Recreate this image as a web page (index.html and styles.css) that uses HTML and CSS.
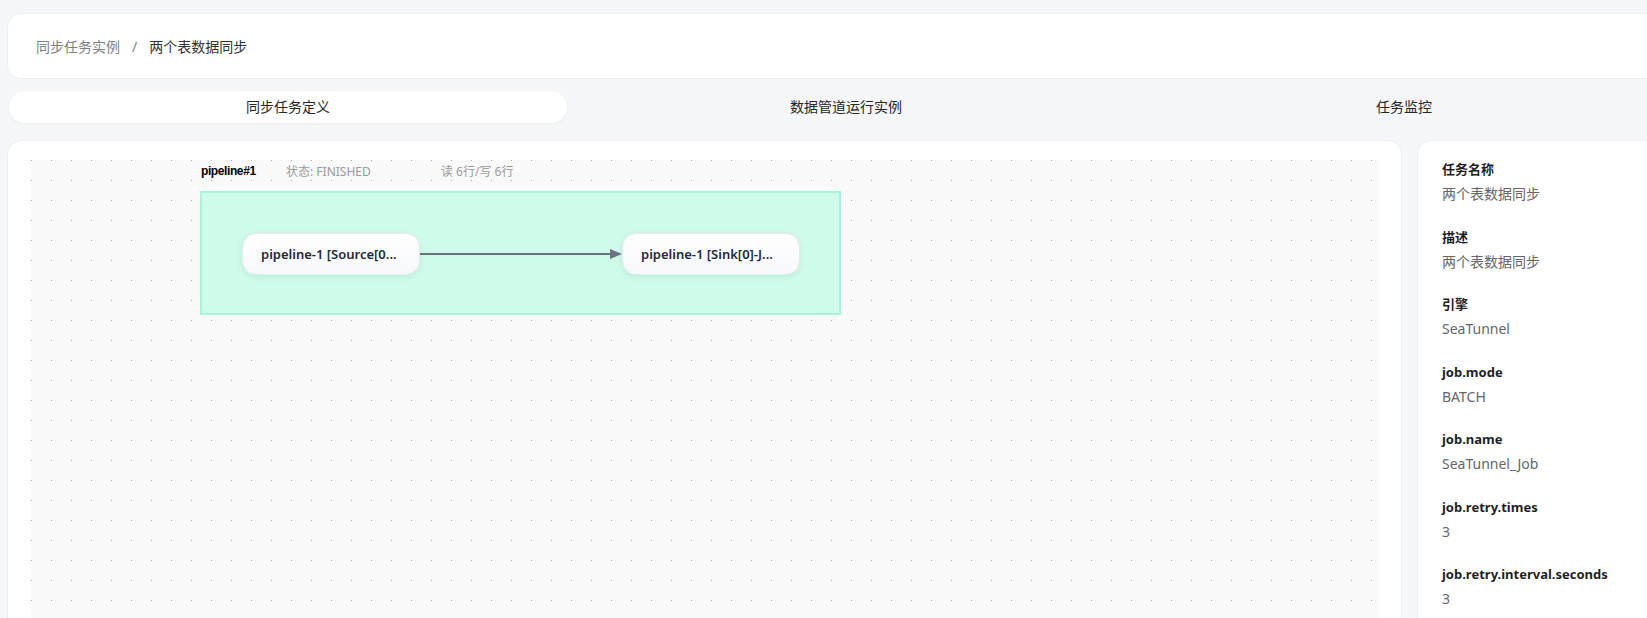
FILE: index.html
```html
<!DOCTYPE html>
<html lang="zh-CN">
<head>
    <meta charset="UTF-8">
    <title>同步任务实例 - 两个表数据同步</title>
    <link rel="stylesheet" href="styles.css">
</head>
<body>
    <div class="page">
        <div class="header">
            <span class="crumb">同步任务实例</span>
            <span class="crumb-sep">/</span>
            <span class="crumb-current">两个表数据同步</span>
        </div>

        <div class="tabs">
            <div class="tab active">同步任务定义</div>
            <div class="tab">数据管道运行实例</div>
            <div class="tab">任务监控</div>
        </div>

        <div class="main">
            <div class="graph-card">
                <div class="canvas">
                    <!-- pipeline group -->
                    <div class="pipeline-head">
                        <span class="pipeline-name">pipeline#1</span>
                        <span class="pipeline-status">状态: FINISHED</span>
                        <span class="pipeline-rows">读 6行/写 6行</span>
                    </div>
                    <div class="pipeline-group">
                        <svg class="edge" width="641" height="124">
                            <line x1="220" y1="63" x2="412" y2="63" stroke="#6b7280" stroke-width="2"/>
                            <path d="M410 58 L422 63 L410 68 Z" fill="#6b7280"/>
                        </svg>
                        <div class="node node-source">pipeline-1 [Source[0...</div>
                        <div class="node node-sink">pipeline-1 [Sink[0]-J...</div>
                    </div>
                </div>
            </div>

            <div class="info-card">
                <div class="info-item">
                    <div class="info-label">任务名称</div>
                    <div class="info-value">两个表数据同步</div>
                </div>
                <div class="info-item">
                    <div class="info-label">描述</div>
                    <div class="info-value">两个表数据同步</div>
                </div>
                <div class="info-item">
                    <div class="info-label">引擎</div>
                    <div class="info-value">SeaTunnel</div>
                </div>
                <div class="info-item">
                    <div class="info-label">job.mode</div>
                    <div class="info-value">BATCH</div>
                </div>
                <div class="info-item">
                    <div class="info-label">job.name</div>
                    <div class="info-value">SeaTunnel_Job</div>
                </div>
                <div class="info-item">
                    <div class="info-label">job.retry.times</div>
                    <div class="info-value">3</div>
                </div>
                <div class="info-item">
                    <div class="info-label">job.retry.interval.seconds</div>
                    <div class="info-value">3</div>
                </div>
            </div>
        </div>
    </div>
</body>
</html>
```

FILE: styles.css
```css
body {
    margin: 0;
    background-color: #f5f6f8;
    font-family: "Noto Sans", "Noto Sans CJK SC", sans-serif;
    color: #333;
    overflow: hidden;
}

.page {
    width: 1678px;
    height: 605px;
    overflow: hidden;
    padding: 13px 7px 0;
}

.header {
    height: 64px;
    display: flex;
    align-items: center;
    padding: 0 28px;
    background-color: white;
    border: 1px solid #eceef1;
    border-radius: 14px;
    font-size: 14px;
}

.crumb {
    color: #808080;
}

.crumb-sep {
    color: #808080;
    margin: 0 12px;
}

.crumb-current {
    color: #333;
}

.tabs {
    display: grid;
    grid-template-columns: repeat(3, 1fr);
    padding: 0 2px;
    margin-top: 12px;
}

.tab {
    height: 32px;
    line-height: 32px;
    text-align: center;
    font-size: 14px;
    color: #262626;
    border-radius: 16px;
}

.tab.active {
    background-color: white;
    box-shadow: 0 1px 3px rgba(0, 0, 0, 0.06);
}

.main {
    display: flex;
    gap: 15px;
    margin-top: 17px;
}

.graph-card {
    width: 1395px;
    box-sizing: border-box;
    padding: 19px 22px 0 23px;
    background-color: white;
    border: 1px solid #eceef1;
    border-radius: 14px;
    height: 520px;
}

.canvas {
    position: relative;
    height: 500px;
    background-color: #f9f9f9;
    background-image: radial-gradient(circle at 0.5px 0.5px, #a9a9a9 0.7px, transparent 1px);
    background-size: 20px 20px;
}

.pipeline-head {
    position: absolute;
    left: 170px;
    top: 2px;
    height: 18px;
    display: flex;
    align-items: center;
}

.pipeline-name {
    font-family: "Liberation Sans", Arial, sans-serif;
    font-weight: bold;
    font-size: 12px;
    letter-spacing: -0.4px;
    color: #000;
    width: 85px;
}

.pipeline-status {
    font-size: 12px;
    color: #999;
    width: 155px;
}

.pipeline-rows {
    font-size: 12px;
    color: #999;
}

.pipeline-group {
    position: absolute;
    left: 169px;
    top: 31px;
    width: 641px;
    height: 124px;
    box-sizing: border-box;
    background-color: #cffcea;
    border: 2px solid #a7f5d8;
}

.edge {
    position: absolute;
    left: -2px;
    top: -2px;
}

.node {
    position: absolute;
    top: 40px;
    width: 178px;
    height: 42px;
    box-sizing: border-box;
    padding-left: 18px;
    line-height: 40px;
    font-size: 13px;
    font-weight: 600;
    color: #1f2937;
    white-space: nowrap;
    background: linear-gradient(180deg, #ffffff, #f7f8fb);
    border: 1px solid #e6e8ee;
    border-radius: 14px;
    box-shadow: 0 2px 6px rgba(0, 0, 0, 0.08);
}

.node-source {
    left: 40px;
}

.node-sink {
    left: 420px;
}

.info-card {
    flex: 1;
    box-sizing: border-box;
    height: 520px;
    padding: 18px 24px;
    background-color: white;
    border: 1px solid #eceef1;
    border-radius: 14px;
}

.info-item {
    margin-bottom: 21.5px;
}

.info-label {
    font-size: 13px;
    font-weight: bold;
    line-height: 20px;
    color: #1f1f1f;
}

.info-value {
    margin-top: 4px;
    font-size: 14px;
    line-height: 22px;
    color: #666;
}
```
